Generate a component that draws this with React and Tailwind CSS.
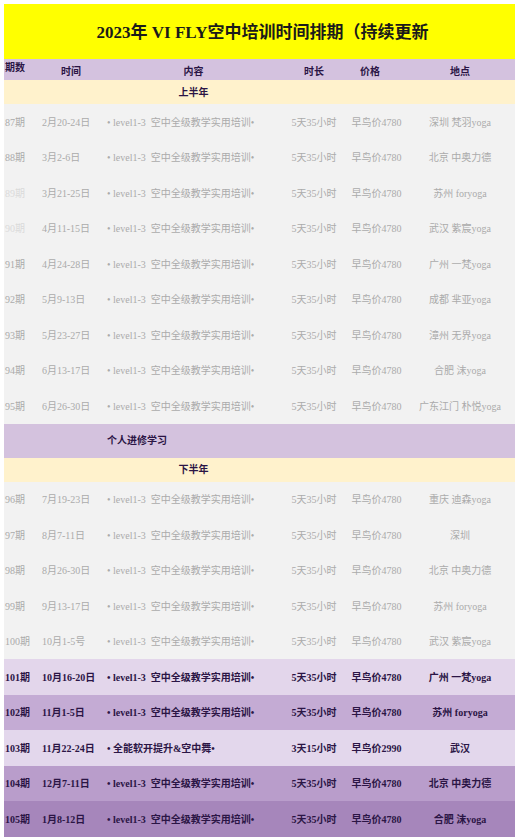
const upper = [
  { no: '87期', date: '2月20-24日', place: '深圳 梵羽yoga' },
  { no: '88期', date: '3月2-6日', place: '北京 中奥力德' },
  { no: '89期', date: '3月21-25日', place: '苏州 foryoga', faint: true },
  { no: '90期', date: '4月11-15日', place: '武汉 紫宸yoga', faint: true },
  { no: '91期', date: '4月24-28日', place: '广州 一梵yoga' },
  { no: '92期', date: '5月9-13日', place: '成都 芈亚yoga' },
  { no: '93期', date: '5月23-27日', place: '漳州 无界yoga' },
  { no: '94期', date: '6月13-17日', place: '合肥 沫yoga' },
  { no: '95期', date: '6月26-30日', place: '广东江门 朴悦yoga' },
];

const lowerPast = [
  { no: '96期', date: '7月19-23日', place: '重庆 迪森yoga' },
  { no: '97期', date: '8月7-11日', place: '深圳' },
  { no: '98期', date: '8月26-30日', place: '北京 中奥力德' },
  { no: '99期', date: '9月13-17日', place: '苏州 foryoga' },
  { no: '100期', date: '10月1-5号', place: '武汉 紫宸yoga' },
];

const lowerNext = [
  { no: '101期', date: '10月16-20日', place: '广州 一梵yoga', bg: 'bg-[#e3d6eb]' },
  { no: '102期', date: '11月1-5日', place: '苏州 foryoga', bg: 'bg-[#c4abd4]' },
  {
    no: '103期',
    date: '11月22-24日',
    course: '• 全能软开提升&空中舞•',
    hours: '3天15小时',
    price: '早鸟价2990',
    place: '武汉',
    bg: 'bg-[#e3d7ec]',
  },
  { no: '104期', date: '12月7-11日', place: '北京 中奥力德', bg: 'bg-[#b99dcb]' },
  { no: '105期', date: '1月8-12日', place: '合肥 沫yoga', bg: 'bg-[#a686bb]' },
];

const grid = 'grid grid-cols-[34px_66px_179px_62px_60px_110px]';

function Row({ row, active }) {
  const course = row.course || '• level1-3  空中全级教学实用培训•';
  const hours = row.hours || '5天35小时';
  const price = row.price || '早鸟价4780';
  const tone = active
    ? 'text-[#2b1545] font-bold'
    : 'text-[#ababab]';
  return (
    <div className={`${grid} h-[35.5px] pt-px items-center text-[10px] whitespace-nowrap ${active ? row.bg : 'bg-[#f2f2f2]'} ${tone}`}>
      <div className={`pl-px ${row.faint ? 'text-[#dadada]' : ''}`}>{row.no}</div>
      <div className="pl-1">{row.date}</div>
      <div className="pl-[3px] whitespace-pre">{course}</div>
      <div className="text-center">{hours}</div>
      <div className="text-center pl-[3px]">{price}</div>
      <div className="text-center">{row.place}</div>
    </div>
  );
}

function HalfTitle({ label }) {
  return (
    <div className={`${grid} bg-[#fff2cc] text-[10px] font-bold text-[#2b1545] items-center`}>
      <div className="col-start-3 text-center">{label}</div>
    </div>
  );
}

export default function App() {
  return (
    <div
      className="w-[520px] h-[838px] bg-white pt-1 pl-1 overflow-hidden"
      style={{ fontFamily: '"Liberation Serif", "Noto Sans CJK SC", serif' }}
    >
      <div className="w-[511px]">
        <div className="h-[55px] bg-[#ffff00] flex items-center justify-center pt-[2px] pl-[6px]">
          <h1 className="text-[17px] font-bold text-[#1a1a1a]">2023年 VI FLY空中培训时间排期（持续更新</h1>
        </div>

        <div className={`${grid} h-[21px] bg-[#d4c2df] text-[10px] font-bold text-[#2b1545]`}>
          <div className="pl-px pt-px">期数</div>
          <div className="text-center pt-[5px]">时间</div>
          <div className="text-center pt-[5px]">内容</div>
          <div className="text-center pt-[5px]">时长</div>
          <div className="text-center pt-[5px] pr-[10px]">价格</div>
          <div className="text-center pt-[5px]">地点</div>
        </div>

        <div className="h-[24px] flex flex-col justify-center bg-[#fff2cc]">
          <HalfTitle label="上半年" />
        </div>

        {upper.map((r) => (
          <Row key={r.no} row={r} />
        ))}

        <div className={`${grid} h-[34px] bg-[#d4c2de] items-center text-[10px] font-bold text-[#2b1545]`}>
          <div className="col-start-3 pl-[3px]">个人进修学习</div>
        </div>

        <div className="h-[24px] flex flex-col justify-center bg-[#fff2cc]">
          <HalfTitle label="下半年" />
        </div>

        {lowerPast.map((r) => (
          <Row key={r.no} row={r} />
        ))}
        {lowerNext.map((r) => (
          <Row key={r.no} row={r} active />
        ))}
      </div>
    </div>
  );
}
